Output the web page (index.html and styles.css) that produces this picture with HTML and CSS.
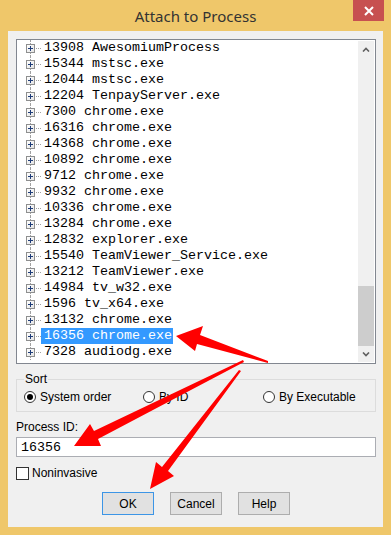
FILE: index.html
```html
<!DOCTYPE html>
<html lang="en">
<head>
    <meta charset="UTF-8">
    <title>Attach to Process</title>
    <link rel="stylesheet" href="styles.css">
</head>
<body>
    <div class="window">
        <div class="titlebar">
            <span class="title">Attach to Process</span>
            <div class="close">
                <svg width="10" height="10" viewBox="0 0 10 10"><path d="M1 1 L9 9 M9 1 L1 9" stroke="#fff" stroke-width="2"/></svg>
            </div>
        </div>
        <div class="client">
            <div class="proc-list">
                <div class="tree">
                    <div class="row"><span class="expander"></span><span class="connector"></span><span class="label">13908 AwesomiumProcess</span></div>
                    <div class="row"><span class="expander"></span><span class="connector"></span><span class="label">15344 mstsc.exe</span></div>
                    <div class="row"><span class="expander"></span><span class="connector"></span><span class="label">12044 mstsc.exe</span></div>
                    <div class="row"><span class="expander"></span><span class="connector"></span><span class="label">12204 TenpayServer.exe</span></div>
                    <div class="row"><span class="expander"></span><span class="connector"></span><span class="label">7300 chrome.exe</span></div>
                    <div class="row"><span class="expander"></span><span class="connector"></span><span class="label">16316 chrome.exe</span></div>
                    <div class="row"><span class="expander"></span><span class="connector"></span><span class="label">14368 chrome.exe</span></div>
                    <div class="row"><span class="expander"></span><span class="connector"></span><span class="label">10892 chrome.exe</span></div>
                    <div class="row"><span class="expander"></span><span class="connector"></span><span class="label">9712 chrome.exe</span></div>
                    <div class="row"><span class="expander"></span><span class="connector"></span><span class="label">9932 chrome.exe</span></div>
                    <div class="row"><span class="expander"></span><span class="connector"></span><span class="label">10336 chrome.exe</span></div>
                    <div class="row"><span class="expander"></span><span class="connector"></span><span class="label">13284 chrome.exe</span></div>
                    <div class="row"><span class="expander"></span><span class="connector"></span><span class="label">12832 explorer.exe</span></div>
                    <div class="row"><span class="expander"></span><span class="connector"></span><span class="label">15540 TeamViewer_Service.exe</span></div>
                    <div class="row"><span class="expander"></span><span class="connector"></span><span class="label">13212 TeamViewer.exe</span></div>
                    <div class="row"><span class="expander"></span><span class="connector"></span><span class="label">14984 tv_w32.exe</span></div>
                    <div class="row"><span class="expander"></span><span class="connector"></span><span class="label">1596 tv_x64.exe</span></div>
                    <div class="row"><span class="expander"></span><span class="connector"></span><span class="label">13132 chrome.exe</span></div>
                    <div class="row selected"><span class="expander"></span><span class="connector"></span><span class="label">16356 chrome.exe</span></div>
                    <div class="row"><span class="expander"></span><span class="connector"></span><span class="label">7328 audiodg.exe</span></div>
                </div>
                <div class="scrollbar">
                    <div class="scroll-btn">
                        <svg width="8" height="5" viewBox="0 0 8 5"><path d="M1 4.5 L4 1.5 L7 4.5" stroke="#606060" stroke-width="1.6" fill="none"/></svg>
                    </div>
                    <div class="track"><div class="thumb"></div></div>
                    <div class="scroll-btn">
                        <svg width="8" height="5" viewBox="0 0 8 5"><path d="M1 0.5 L4 3.5 L7 0.5" stroke="#606060" stroke-width="1.6" fill="none"/></svg>
                    </div>
                </div>
            </div>

            <fieldset class="sort">
                <legend>Sort</legend>
                <div class="radios">
                    <label class="radio"><span class="dot checked"></span>System order</label>
                    <label class="radio"><span class="dot"></span>By ID</label>
                    <label class="radio"><span class="dot"></span>By Executable</label>
                </div>
            </fieldset>

            <div class="field-label">Process ID:</div>
            <input class="pid" type="text" value="16356">

            <label class="check"><span class="box"></span>Noninvasive</label>

            <div class="buttons">
                <button class="btn default">OK</button>
                <button class="btn">Cancel</button>
                <button class="btn">Help</button>
            </div>
        </div>

        <!-- annotation arrows drawn over the dialog -->
        <svg class="arrows" width="391" height="535" viewBox="0 0 391 535">
            <polygon points="176,336 203,326 200,335 268,361 268,363 197,344 195,351" fill="#ff0000"/>
            <polygon points="74,446 90,424 94,431 243,360 244,362 98,439 101,446" fill="#ff0000"/>
            <polygon points="150,489 156,462 162,467 239,370 241,371 168,471 174,476" fill="#ff0000"/>
        </svg>
    </div>
</body>
</html>
```

FILE: styles.css
```css
body {
    margin: 0;
    background: #fff;
    font-family: "Liberation Sans", Arial, sans-serif;
}
.window {
    width: 391px;
    height: 535px;
    background: #efc76a;
    position: relative;
    display: flex;
    flex-direction: column;
}
.titlebar {
    height: 31px;
    display: flex;
    justify-content: center;
    align-items: center;
    position: relative;
}
.title {
    font-family: "Noto Sans", sans-serif;
    font-size: 15px;
    color: #333;
    margin-top: 1px;
}
.close {
    position: absolute;
    top: 0;
    right: 7px;
    width: 31px;
    height: 21px;
    background: #c75050;
    display: flex;
    justify-content: center;
    align-items: center;
}
.client {
    margin: 0 8px 8px;
    flex: 1;
    background: #f0f0f0;
    padding: 8px 7px 0 8px;
    font-size: 12px;
    color: #000;
}
.proc-list {
    height: 325px;
    box-sizing: border-box;
    border: 1px solid #828790;
    background: #fff;
    display: flex;
}
.tree {
    flex: 1;
    overflow: hidden;
}
.row {
    height: 16px;
    display: flex;
    align-items: center;
    position: relative;
}
.row::before {
    content: "";
    position: absolute;
    left: 13px;
    top: 0;
    bottom: 0;
    border-left: 1px dotted #a0a0a0;
}
.expander {
    width: 9px;
    height: 9px;
    margin-left: 9px;
    box-sizing: border-box;
    border: 1px solid #8e8f8f;
    background: linear-gradient(135deg, #fff, #e4e4e4);
    position: relative;
    z-index: 1;
}
.expander::before,
.expander::after {
    content: "";
    position: absolute;
    background: #1e3c78;
}
.expander::before {
    left: 1px;
    top: 3px;
    width: 5px;
    height: 1px;
}
.expander::after {
    left: 3px;
    top: 1px;
    width: 1px;
    height: 5px;
}
.connector {
    width: 5px;
    margin-left: 1px;
    border-top: 1px dotted #a0a0a0;
}
.label {
    padding: 0 1px 0 3px;
    line-height: 16px;
    font-family: "Liberation Mono", monospace;
    font-size: 13.33px;
    white-space: pre;
}
.row.selected .label {
    background: #3399ff;
    color: #fff;
}
.scrollbar {
    width: 16px;
    margin: 1px 1px 1px 0;
    background: #f0f0f0;
    display: flex;
    flex-direction: column;
}
.scroll-btn {
    height: 17px;
    display: flex;
    justify-content: center;
    align-items: center;
}
.scroll-btn:last-child {
    height: 16px;
}
.track {
    flex: 1;
    display: flex;
    flex-direction: column;
    justify-content: flex-end;
}
.thumb {
    height: 60px;
    background: #cdcdcd;
}
.sort {
    margin: 8px 0 0;
    padding: 3px 0 7px 7px;
    border: 1px solid #dcdcdc;
    min-width: 0;
}
.sort legend {
    padding: 0 1px;
    line-height: 15px;
}
.radios {
    display: grid;
    grid-template-columns: 119px 120px auto;
    height: 14px;
}
.radio {
    display: flex;
    align-items: center;
    gap: 4px;
}
.dot {
    width: 12px;
    height: 12px;
    box-sizing: border-box;
    border: 1px solid #333;
    border-radius: 50%;
    background: #fff;
    display: flex;
    justify-content: center;
    align-items: center;
}
.dot.checked::after {
    content: "";
    width: 6px;
    height: 6px;
    border-radius: 50%;
    background: #000;
}
.field-label {
    margin-top: 8px;
    line-height: 15px;
}
.pid {
    display: block;
    margin-top: 2px;
    width: 360px;
    height: 20px;
    box-sizing: border-box;
    border: 1px solid #abadb3;
    padding: 0 4px;
    font-family: "Liberation Mono", monospace;
    font-size: 13.33px;
    color: #000;
    background: #fff;
    outline: none;
}
.check {
    margin-top: 9px;
    display: flex;
    align-items: center;
    gap: 3px;
    line-height: 15px;
}
.box {
    width: 13px;
    height: 13px;
    box-sizing: border-box;
    border: 1px solid #333;
    background: #fff;
}
.buttons {
    margin-top: 11px;
    padding-left: 86px;
    display: flex;
    gap: 16px;
}
.btn {
    width: 52px;
    height: 23px;
    box-sizing: border-box;
    border: 1px solid #adadad;
    background: #e1e1e1;
    font-family: "Liberation Sans", Arial, sans-serif;
    font-size: 12px;
    color: #000;
    padding: 0;
}
.btn.default {
    border-color: #3c95e6;
}
.arrows {
    position: absolute;
    top: 0;
    left: 0;
    pointer-events: none;
}
```
